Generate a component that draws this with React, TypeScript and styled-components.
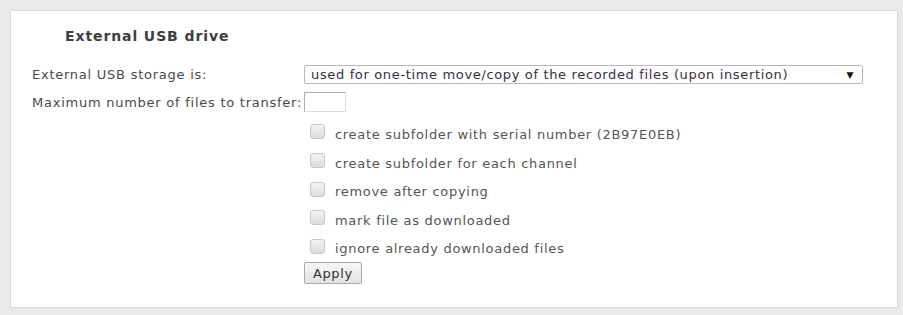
import { FC } from 'react';
import styled, { createGlobalStyle } from 'styled-components';

const options = [
    'create subfolder with serial number (2B97E0EB)',
    'create subfolder for each channel',
    'remove after copying',
    'mark file as downloaded',
    'ignore already downloaded files',
]

const Global = createGlobalStyle`
    html, body {
        margin: 0;
        padding: 0;
        background: #e9e9e9;
    }
    body {
        font-family: "DejaVu Sans", Verdana, sans-serif;
        font-size: 13px;
        letter-spacing: 0.6px;
        color: #444;
    }
`

const App: FC = () => {
    return (
        <>
            <Global />
            <SFrame>
                <SPanel>
                    <SH2>External USB drive</SH2>
                    <SForm>
                        <SLabel>External USB storage is:</SLabel>
                        <SSelect>
                            <span>used for one-time move/copy of the recorded files (upon insertion)</span>
                            <SArrow>▼</SArrow>
                        </SSelect>
                        <SLabel>Maximum number of files to transfer:</SLabel>
                        <div>
                            <SInput />
                        </div>
                        <span />
                        <SChecks>
                            {options.map((text) => (
                                <SCheckRow key={text}>
                                    <SBox />
                                    <span>{text}</span>
                                </SCheckRow>
                            ))}
                        </SChecks>
                        <span />
                        <div>
                            <SButton>Apply</SButton>
                        </div>
                    </SForm>
                </SPanel>
            </SFrame>
        </>
    )
}

export default App

const SFrame = styled.div`
    padding: 10px 5px 7px 10px;
    height: 315px;
    box-sizing: border-box;
`
const SPanel = styled.section`
    background: #fff;
    border: 1px solid #dcdcdc;
    height: 100%;
    box-sizing: border-box;
    padding: 17px 20px 0 21px;
`
const SH2 = styled.h2`
    margin: 0 0 21px 33px;
    font-size: 14px;
    letter-spacing: 0.9px;
    font-weight: bold;
    color: #3e3e3e;
`
const SForm = styled.div`
    display: grid;
    grid-template-columns: 272px 559px;
    row-gap: 8px;
    align-items: center;
`
const SLabel = styled.div`
    color: #4a4a4a;
    white-space: nowrap;
    letter-spacing: 0.75px;
`
const SSelect = styled.div`
    display: flex;
    align-items: center;
    justify-content: space-between;
    height: 17px;
    border: 1px solid #b9b9b9;
    border-radius: 2px;
    padding: 0 8px 0 6px;
    color: #3c2c45;
    font-size: 13px;
    letter-spacing: 0.65px;
    white-space: nowrap;
`
const SArrow = styled.span`
    font-size: 9px;
    color: #111;
`
const SInput = styled.div`
    width: 40px;
    height: 18px;
    border: 1px solid #adadad;
    border-right-color: #ddd;
    border-bottom-color: #ddd;
`
const SChecks = styled.div`
    display: flex;
    flex-direction: column;
    gap: 11px;
    padding: 5px 0 0 6px;
`
const SCheckRow = styled.label`
    display: flex;
    align-items: center;
    gap: 10px;
    height: 18px;
    color: #555;
    letter-spacing: 0.7px;
    &:nth-child(n + 3) {
        margin-top: -0.5px;
    }
`
const SBox = styled.span`
    width: 13px;
    height: 13px;
    border: 1px solid #c8c8c8;
    border-radius: 3px;
    background: linear-gradient(#f4f4f4, #dcdcdc);
    margin-top: -5px;
`
const SButton = styled.button`
    font-family: "DejaVu Sans", Verdana, sans-serif;
    font-size: 13px;
    letter-spacing: 0.6px;
    color: #333;
    height: 22px;
    margin-top: -5px;
    padding: 0 8px;
    border: 1px solid #aaa;
    border-radius: 2px;
    background: linear-gradient(#f7f7f7, #e2e2e2);
`
